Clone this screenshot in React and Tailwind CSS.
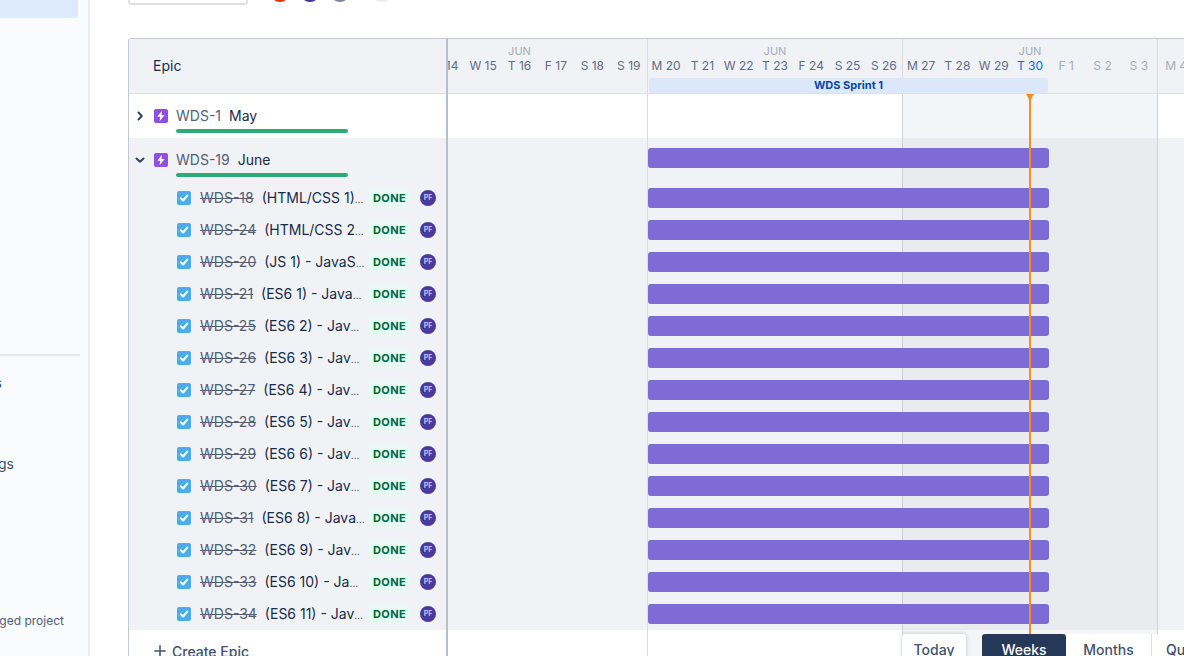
const tasks = [
  ["WDS-18", "(HTML/CSS 1)"],
  ["WDS-24", "(HTML/CSS 2"],
  ["WDS-20", "(JS 1) - JavaS"],
  ["WDS-21", "(ES6 1) - Java"],
  ["WDS-25", "(ES6 2) - Jav"],
  ["WDS-26", "(ES6 3) - Jav"],
  ["WDS-27", "(ES6 4) - Jav"],
  ["WDS-28", "(ES6 5) - Jav"],
  ["WDS-29", "(ES6 6) - Jav"],
  ["WDS-30", "(ES6 7) - Jav"],
  ["WDS-31", "(ES6 8) - Java"],
  ["WDS-32", "(ES6 9) - Jav"],
  ["WDS-33", "(ES6 10) - Ja"],
  ["WDS-34", "(ES6 11) - Jav"],
];

const weeks = [
  ["M 13", "T 14", "W 15", "T 16", "F 17", "S 18", "S 19"],
  ["M 20", "T 21", "W 22", "T 23", "F 24", "S 25", "S 26"],
  ["M 27", "T 28", "W 29", "T 30", "F 1", "S 2", "S 3"],
  ["M 4", "T 5", "W 6", "T 7", "F 8", "S 9", "S 10"],
];

const future = ["F 1", "S 2", "S 3", "M 4", "T 5", "W 6", "T 7", "F 8", "S 9", "S 10"];

function Epic({ id, name, open, tinted }) {
  return (
    <div className={`h-[44px] shrink-0 flex flex-col pt-[15px] ${tinted ? "bg-[#f1f2f6]" : "bg-white"}`}>
      <div className="flex items-center h-[14px]">
        <div className="w-[24px] flex justify-end pr-[8px]">
          <svg width="10" height="10" viewBox="0 0 10 10" fill="none" stroke="#344563" strokeWidth="2" strokeLinecap="round" strokeLinejoin="round">
            {open ? <path d="M1.500 3.500 5 6.800l3.500-3.300" /> : <path d="M3.500 1.500 6.800 5 3.500 8.500" />}
          </svg>
        </div>
        <div className="w-[14px] h-[14px] ml-[1px] rounded-[2px] bg-[#904ee2] flex items-center justify-center">
          <svg width="10" height="12" viewBox="0 0 8 10"><path d="M4.800.6 1 5.600h2.400L2.800 9.400 7 4.200H4.400z" fill="#fff" /></svg>
        </div>
        <span className="ml-[8px] text-[14px] leading-[20px] text-[#505f79]">{id}</span>
        <span className="ml-[8px] text-[14px] leading-[20px] text-[#172b4d]">{name}</span>
      </div>
      <div className="ml-[47px] mt-[6px] w-[172px] h-[4px] rounded-full bg-[#2eab74]" />
    </div>
  );
}

function Task({ id, text }) {
  return (
    <div className="h-[32px] shrink-0 bg-[#f1f2f6] flex items-center pl-[48px]">
      <div className="w-[14px] h-[14px] rounded-[2px] bg-[#4bade8] flex items-center justify-center shrink-0">
        <svg width="10" height="10" viewBox="0 0 10 10" fill="none" stroke="#fff" strokeWidth="2" strokeLinecap="round" strokeLinejoin="round"><path d="M1.800 5.200 4.200 7.500 8.300 2.500" /></svg>
      </div>
      <span className="ml-[9px] text-[14px] leading-[20px] text-[#505f79] line-through shrink-0">{id}</span>
      <span className="ml-[8px] text-[14px] leading-[20px] text-[#172b4d] whitespace-nowrap flex-1 min-w-0">
        {text}<span className="text-[10px]">…</span>
      </span>
      <span className="ml-[5px] h-[16px] w-[41px] rounded-[3px] bg-[#e3fcef] text-[#006644] text-[11px] leading-[16px] font-bold text-center tracking-[0.4px] shrink-0">DONE</span>
      <div className="ml-[10px] mr-[10px] w-[16px] h-[16px] rounded-full bg-[#483a9f] text-[#d5d0f0] text-[7px] leading-[16px] text-center font-semibold shrink-0">PF</div>
    </div>
  );
}

function Cells({ tinted }) {
  return (
    <>
      <div className={`w-[255px] shrink-0 ${tinted ? "bg-[#f1f2f6]" : "bg-white"}`} />
      <div className={`w-[255px] shrink-0 border-l border-[#d8dade] ${tinted ? "bg-[#f1f2f6]" : "bg-white"}`} />
      <div className={`w-[255px] shrink-0 border-l border-[#cfd1d6] ${tinted ? "bg-[#eaebef]" : "bg-[#f4f5f7]"}`} />
      <div className={`w-[255px] shrink-0 border-l border-[#cfd1d6] ${tinted ? "bg-[#f1f2f6]" : "bg-white"}`} />
    </>
  );
}

function TimeRow({ h, tinted, barTop }) {
  return (
    <div className={`relative flex shrink-0 ${h}`}>
      <Cells tinted={tinted} />
      {barTop && <div className={`absolute left-[256px] w-[401px] h-[20px] rounded-[3px] bg-[#7f6bd5] ${barTop}`} />}
    </div>
  );
}

export default function App() {
  return (
    <div className="w-[1184px] h-[656px] overflow-hidden flex bg-white text-[#172b4d] font-['Inter','Liberation_Sans',sans-serif]">
      <aside className="w-[90px] h-full shrink-0 bg-[#fafbfc] border-r-2 border-[#ebecf0] flex flex-col">
        <div className="w-[78px] h-[18px] bg-[#deebff] rounded-br-[3px]" />
        <div className="w-[80px] h-[2px] mt-[336px] bg-[#e6e8ec]" />
        <div className="w-[2px] mt-[17px] h-[20px] flex justify-end overflow-hidden text-[14px] leading-[20px] text-[#42526e] whitespace-nowrap">Issues</div>
        <div className="w-[14px] mt-[61px] h-[20px] flex justify-end overflow-hidden text-[14px] leading-[20px] text-[#42526e] whitespace-nowrap">Project settings</div>
        <div className="w-[64px] mt-[138px] h-[18px] flex justify-end overflow-hidden text-[12px] leading-[18px] text-[#505f79] whitespace-nowrap">You're in a team-managed project</div>
      </aside>

      <main className="flex-1 min-w-0 pl-[38px] flex flex-col">
        <div className="h-[38px] shrink-0 overflow-hidden">
          <div className="-mt-[27px] flex items-start">
            <div className="w-[120px] h-[32px] rounded-[3px] border-2 border-[#dfe1e6] bg-white" />
            <div className="mt-[-1px] ml-[22px] w-[20px] h-[30px] rounded-full bg-[#de350b]" />
            <div className="mt-[-1px] ml-[10px] w-[20px] h-[30px] rounded-full bg-[#403294]" />
            <div className="mt-[-1px] ml-[10px] w-[20px] h-[30px] rounded-full bg-[#7a869a]" />
            <div className="mt-[-1px] ml-[22px] w-[20px] h-[30px] rounded-full bg-[#ebecf0]" />
          </div>
        </div>

        <div className="flex w-[1056px] border-t border-l border-[#c1c7d6] rounded-tl-[3px] flex-1 min-h-0">
          <div className="w-[319px] shrink-0 border-r-2 border-[#b8bfcc] flex flex-col">
            <div className="h-[55px] shrink-0 bg-[#f1f2f6] border-b border-[#dfe1e6] pl-[24px] pb-[2px] flex items-center text-[14px] text-[#172b4d]">Epic</div>
            <Epic id="WDS-1" name="May" />
            <Epic id="WDS-19" name="June" open tinted />
            {tasks.map(([id, text]) => <Task key={id} id={id} text={text} />)}
            <div className="flex items-center h-[40px] shrink-0 pl-[25px] pt-[2px] text-[14px] font-medium text-[#42526e]">
              <svg width="12" height="12" viewBox="0 0 12 12" fill="none" stroke="#42526e" strokeWidth="1.500" strokeLinecap="round"><path d="M6 .8v10.400M.8 6h10.400" /></svg>
              <span className="ml-[6px]">Create Epic</span>
            </div>
          </div>

          <div className="relative flex-1 min-w-0 overflow-hidden flex flex-col">
            <div className="-ml-[56px] h-[55px] flex border-b border-[#dfe1e6] bg-[#f1f2f6] shrink-0">
              {weeks.map((days, w) => (
                <div key={w} className={`w-[255px] shrink-0 ${w > 0 ? "border-l border-[#d8dade]" : ""}`}>
                  <div className="text-[11px] leading-[14px] mt-[5px] text-center text-[#a5adba]">{w < 3 ? "JUN" : "JUL"}</div>
                  <div className="grid grid-cols-7 text-[12px] leading-[16px] whitespace-nowrap">
                    {days.map((d) => (
                      <div key={d} className={`text-center ${d === "T 30" ? "text-[#0065ff]" : future.includes(d) ? "text-[#a5adba]" : "text-[#5e6c84]"}`}>{d}</div>
                    ))}
                  </div>
                </div>
              ))}
            </div>
            <div className="absolute left-[201px] top-[39px] w-[399px] h-[15px] rounded-[3px] bg-[#dbe8fc] text-[#0747a6] text-[11px] leading-[15px] font-bold text-center">WDS Sprint 1</div>

            <div className="-ml-[56px] flex flex-col">
              <TimeRow h="h-[44px]" />
              <TimeRow h="h-[44px]" tinted barTop="top-[10px]" />
              {tasks.map(([id]) => <TimeRow key={id} h="h-[32px]" tinted barTop="top-[6px]" />)}
              <TimeRow h="h-[40px]" />
            </div>

            <div className="absolute left-[581px] top-[55px] w-[2px] h-[560px] bg-[#ff8b1f]" />
            <div className="absolute left-[578px] top-[55px] w-0 h-0 border-l-[4px] border-r-[4px] border-t-[7px] border-l-transparent border-r-transparent border-t-[#ff8b1f]" />

            <div className="absolute left-[454px] top-[595px] flex items-start text-[14px] font-medium text-[#42526e]">
              <div className="w-[64px] h-[40px] pt-[5px] text-center bg-white rounded-t-[3px] shadow-[0_0_4px_rgba(9,30,66,0.25)]">Today</div>
              <div className="ml-[16px] w-[84px] h-[40px] pt-[5px] text-center bg-[#253858] text-white rounded-t-[3px]">Weeks</div>
              <div className="w-[86px] h-[40px] pt-[5px] text-center bg-white border-r border-[#dfe1e6]">Months</div>
              <div className="w-[90px] h-[40px] pt-[5px] pl-[14px] bg-white">Quarters</div>
            </div>
          </div>
        </div>
      </main>
    </div>
  );
}
